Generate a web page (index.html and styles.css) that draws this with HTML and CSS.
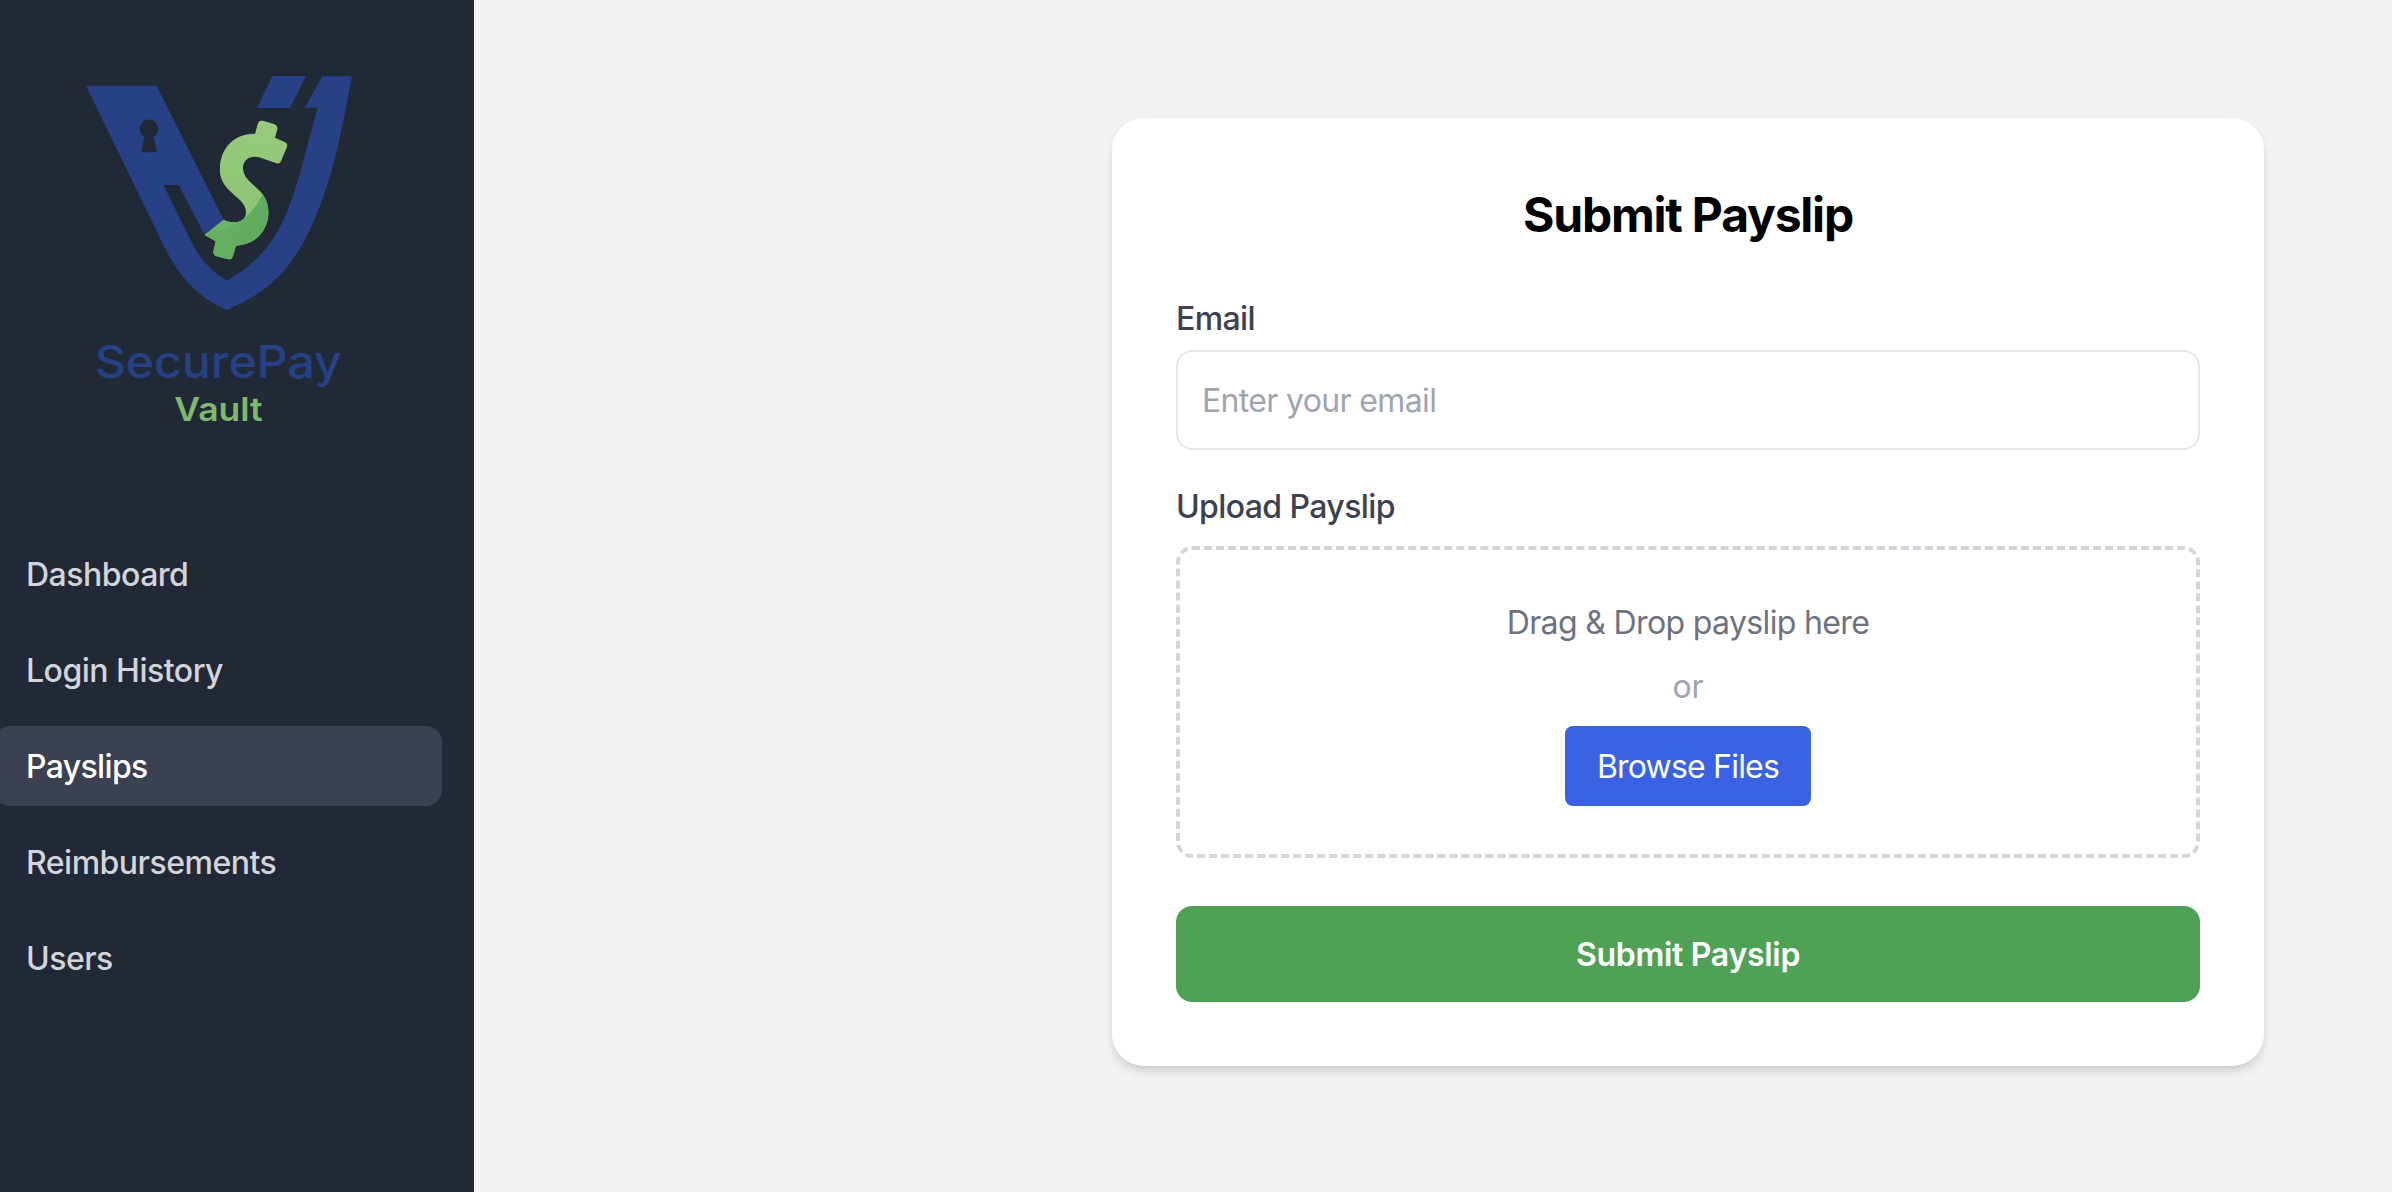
FILE: index.html
```html
<!DOCTYPE html>
<html lang="en">
<head>
<meta charset="utf-8">
<title>Submit Payslip</title>
<link rel="stylesheet" href="styles.css">
</head>
<body>
<div class="app">
  <aside class="sidebar">
    <svg class="logo" viewBox="0 0 960 1200" role="img" aria-label="SecurePay Vault">
      <defs>
        <linearGradient id="light" x1="0" y1="0" x2="0" y2="1"><stop offset="0" stop-color="#97cb7c"/><stop offset="1" stop-color="#87c272"/></linearGradient>
        <linearGradient id="dark" x1="0" y1="0" x2="1" y2="0"><stop offset="0" stop-color="#66b061"/><stop offset="1" stop-color="#5eaa5d"/></linearGradient>
        <clipPath id="dollar"><path d="M594 220Q598 209 609 212L641 222Q654 227 652 238L645 263L674 276Q684 280 681 290L663 334Q659 343 649 340L598 322C570 314 549 330 549 354C549 386 578 399 603 427C631 459 630 503 614 534C597 567 568 584 528 587L518 621Q515 630 505 628L470 619Q459 615 460 605L467 574L434 555L491 510C518 523 557 521 558 487C558 458 533 446 509 422C483 397 478 375 480 349C483 293 524 250 585 251Z"/></clipPath>
      </defs>
      <path class="logo-blue" fill-rule="evenodd" d="M78 107H290L491 510L434 555L356 405H310L402 590Q438 656 501 692Q600 638 655 540C706 449 729 330 773 173H735L787 79H876C842 255 817 402 746 546C688 664 626 725 501 780C407 740 351 671 307 578ZM253 261L244 307H291L281 261A28 28 0 1 0 253 261Z"/>
      <path class="logo-blue" d="M637 78H738L690 174H591Z"/>
      <g clip-path="url(#dollar)">
        <path fill="url(#light)" d="M420 200H700V640H420Z"/>
        <path fill="url(#dark)" d="M607 432C594 462 578 482 556 501L480 500L420 545V650H680V400Z"/>
        <path class="logo-tip" d="M430 556L491 508Q520 520 550 508Q510 536 466 546Z"/>
      </g>
      <text class="logo-name" x="104" y="985" textLength="741" lengthAdjust="spacingAndGlyphs">SecurePay</text>
      <text class="logo-sub" x="343" y="1112" textLength="265" lengthAdjust="spacingAndGlyphs">Vault</text>
    </svg>
    <nav class="menu">
      <a class="menu-item">Dashboard</a>
      <a class="menu-item">Login History</a>
      <a class="menu-item active">Payslips</a>
      <a class="menu-item">Reimbursements</a>
      <a class="menu-item">Users</a>
    </nav>
  </aside>
  <main class="content">
    <form class="card">
      <h2 class="title">Submit Payslip</h2>
      <label class="label" for="email">Email</label>
      <input class="input" id="email" type="email" placeholder="Enter your email">
      <span class="label upload-label">Upload Payslip</span>
      <div class="dropzone">
        <p class="drop-text">Drag &amp; Drop payslip here</p>
        <p class="drop-or">or</p>
        <button class="browse" type="button">Browse Files</button>
      </div>
      <button class="submit" type="button">Submit Payslip</button>
    </form>
  </main>
</div>
</body>
</html>
```
FILE: styles.css
```css
*{box-sizing:border-box;margin:0;padding:0}
body{font-family:Inter,"Liberation Sans",sans-serif;font-size:32px;line-height:48px;background:#f2f3f5}
.app{display:flex;height:1192px;overflow:hidden}
.sidebar{width:474px;flex:none;background:#222936;padding:50px 32px 0 0}
.logo{display:block;width:320px;height:400px;margin:0 0 84px 60px}
.logo-blue{fill:#264186}
.logo-tip{fill:#6cb465}
.logo-name{fill:#264186;font-size:134px;font-weight:500}
.logo-sub{fill:#7dba6b;font-size:98px;font-weight:600}
.menu{display:flex;flex-direction:column;gap:16px;margin-left:-6px}
.menu-item{padding:17px 32px 15px;border-radius:16px;color:#d2d5da;font-weight:500;letter-spacing:-.5px}
.active{background:#3b4150;color:#fff;letter-spacing:-.65px}
.content{flex:1;display:flex;justify-content:flex-end;align-items:flex-start;padding:118px 128px 0 0}
.card{width:1152px;padding:64px;border-radius:32px;background:#fff;display:flex;flex-direction:column;box-shadow:0 8px 12px -2px rgba(0,0,0,.1),0 4px 8px -2px rgba(0,0,0,.1)}
.title{padding-top:1px;font-size:48px;line-height:64px;font-weight:700;text-align:center;color:#000;letter-spacing:-1.22px;margin-bottom:47px}
.label{padding-top:1px;font-weight:500;color:#3b4150;letter-spacing:-.6px}
.input{height:100px;margin:7px 0 32px;padding:1px 24px 0;border:2px solid #e5e6ea;border-radius:16px;font:inherit;letter-spacing:-.65px;background:#fff}
.input::placeholder{color:#9fa4af;opacity:1}
.upload-label{margin-bottom:15px}
.dropzone{display:flex;flex-direction:column;align-items:center;padding:49px 48px 48px;border:4px dashed #d2d5da;border-radius:16px;margin-bottom:48px}
.drop-text{color:#6d7280;letter-spacing:-.64px}
.drop-or{color:#9fa4af;margin:16px 0 15px}
.browse{height:80px;padding:17px 32px 15px;border:0;border-radius:8px;background:#3861e3;color:#fff;font:inherit;letter-spacing:-.8px}
.submit{height:96px;padding-top:1px;border:0;border-radius:16px;background:#4fa156;color:#fff;font:inherit;font-weight:600;letter-spacing:-.29px}
```
